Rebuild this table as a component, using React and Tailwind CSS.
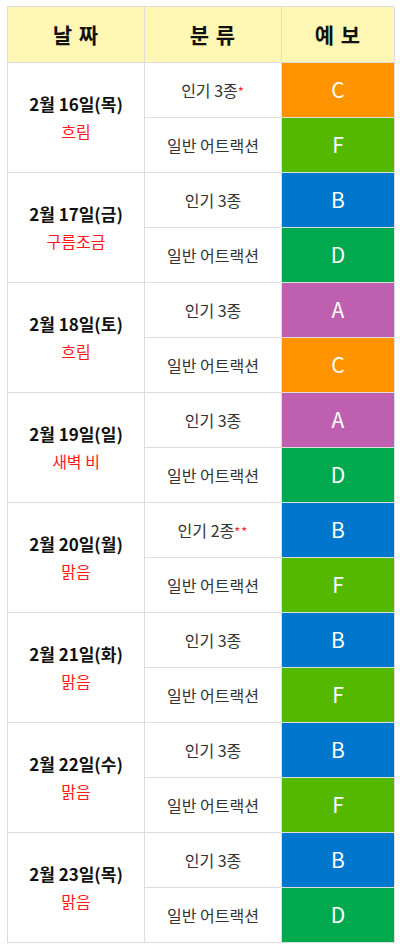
import React from "react";

const rows = [
  { date: "2월 16일(목)", w: "흐림", a: { t: "인기 3종", s: "*", g: "C" }, b: { g: "F" } },
  { date: "2월 17일(금)", w: "구름조금", a: { t: "인기 3종", g: "B" }, b: { g: "D" } },
  { date: "2월 18일(토)", w: "흐림", a: { t: "인기 3종", g: "A" }, b: { g: "C" } },
  { date: "2월 19일(일)", w: "새벽 비", a: { t: "인기 3종", g: "A" }, b: { g: "D" } },
  { date: "2월 20일(월)", w: "맑음", a: { t: "인기 2종", s: "**", g: "B" }, b: { g: "F" } },
  { date: "2월 21일(화)", w: "맑음", a: { t: "인기 3종", g: "B" }, b: { g: "F" } },
  { date: "2월 22일(수)", w: "맑음", a: { t: "인기 3종", g: "B" }, b: { g: "F" } },
  { date: "2월 23일(목)", w: "맑음", a: { t: "인기 3종", g: "B" }, b: { g: "D" } },
];

const gradeBg = {
  A: "bg-[#bf5fb0]",
  B: "bg-[#0077cc]",
  C: "bg-[#ff9400]",
  D: "bg-[#00a84e]",
  F: "bg-[#55b800]",
};

const font = "font-['Noto_Sans_CJK_KR','Noto_Sans',sans-serif]";

export default function App() {
  return (
    <div className={`bg-white pl-[7px] pt-[6px] w-[400px] h-[948px] ${font}`}>
      <table className="border-collapse w-[387px] table-fixed">
        <colgroup>
          <col className="w-[137px]" />
          <col className="w-[137px]" />
          <col className="w-[113px]" />
        </colgroup>
        <thead>
          <tr className="h-[56px]">
            {["날 짜", "분 류", "예 보"].map((h) => (
              <th
                key={h}
                className="border border-[#dddddd] bg-[#fff7b3] text-[21px] font-bold text-[#111] text-center align-middle p-0 tracking-[1px]"
              >
                {h}
              </th>
            ))}
          </tr>
        </thead>
        <tbody>
          {rows.map((r) => (
            <React.Fragment key={r.date}>
              <tr className="h-[55px]">
                <td
                  rowSpan={2}
                  className="border border-[#dddddd] text-center align-middle p-0"
                >
                  <div className="text-[17px] font-semibold text-[#111] leading-[24px]">{r.date}</div>
                  <div className="text-[16px] text-[#ff1a1a] leading-[24px] mt-[3px]">{r.w}</div>
                </td>
                <td className="border border-[#dddddd] text-center align-middle text-[16px] text-[#333] p-0">
                  {r.a.t}
                  {r.a.s && <span className="text-[#ff2a2a] text-[13px] tracking-[1px]">{r.a.s}</span>}
                </td>
                <td
                  className={`border border-[#dddddd] text-center align-middle text-[21px] text-white p-0 ${gradeBg[r.a.g]}`}
                >
                  {r.a.g}
                </td>
              </tr>
              <tr className="h-[55px]">
                <td className="border border-[#dddddd] text-center align-middle text-[16px] text-[#333] p-0">
                  일반 어트랙션
                </td>
                <td
                  className={`border border-[#dddddd] text-center align-middle text-[21px] text-white p-0 ${gradeBg[r.b.g]}`}
                >
                  {r.b.g}
                </td>
              </tr>
            </React.Fragment>
          ))}
        </tbody>
      </table>
    </div>
  );
}
